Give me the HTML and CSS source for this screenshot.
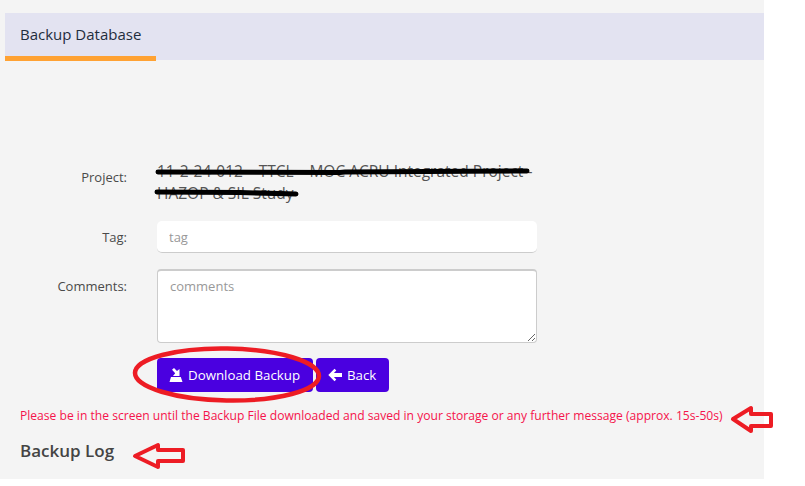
FILE: index.html
```html
<!DOCTYPE html>
<html lang="en">
<head>
  <meta charset="UTF-8">
  <title>Backup Database</title>
  <link rel="stylesheet" href="styles.css">
</head>
<body>
  <div class="page">
    <div class="tabs">
      <div class="tab">Backup Database</div>
    </div>

    <form class="backup-form">
      <div class="row project-row">
        <label>Project:</label>
        <div class="project-name">11-2-24-012 – TTCL – MOC ACRU Integrated Project - HAZOP &amp; SIL Study</div>
      </div>
      <div class="row tag-row">
        <label for="tag">Tag:</label>
        <input id="tag" class="field" type="text" placeholder="tag">
      </div>
      <div class="row comments-row">
        <label for="comments">Comments:</label>
        <textarea id="comments" class="field area" placeholder="comments"></textarea>
      </div>
      <div class="actions">
        <button type="button" class="btn btn-download">
          <svg class="icon" viewBox="0 0 14 14"><path d="M3 1.800 L5 0 L8 3 L10.500 1 L10.500 8 L4 8 L6.200 5.200 Z M2 9 L11.800 9 L13.500 14 L0.500 14 Z"/></svg>
          Download Backup
        </button>
        <button type="button" class="btn btn-back">
          <svg class="icon" viewBox="0 0 14 14"><path d="M6.500 0.800 L8.300 2.600 L5.900 5 L14 5 L14 9 L5.900 9 L8.300 11.400 L6.500 13.200 L0.300 7 Z"/></svg>
          Back
        </button>
      </div>
    </form>

    <p class="warning">Please be in the screen until the Backup File downloaded and saved in your storage or any further message (approx. 15s-50s)</p>
    <h2 class="log-title">Backup Log</h2>
    <p class="log-line">Backups of this project are listed below here</p>
  </div>

  <!-- marks drawn over the screenshot -->
  <svg class="marks" width="805" height="486" viewBox="0 0 805 486">
    <path class="scribble" d="M158 172 L340 172.500 L345 172 L527 171"/>
    <path class="scribble" d="M157 192 L240 192.500 L296 194"/>
    <ellipse class="ring" cx="227" cy="374.500" rx="92" ry="26" transform="rotate(1 227 374)"/>
    <path class="arrow" d="M733 419 L751 408 L751 414 L771 414 L771 426 L751 426 L751 431 Z"/>
    <path class="arrow" d="M135 456 L158 445 L158 450 L183 450 L183 461 L158 461 L158 467 Z"/>
  </svg>
</body>
</html>
```

FILE: styles.css
```css
html, body {
  margin: 0;
  height: 100%;
  background: #fff;
}
body {
  font-family: "Open Sans", "Noto Sans", sans-serif;
  font-size: 14px;
  color: #444;
  overflow: hidden;
}
.page {
  width: 764px;
  height: 479px;
  box-sizing: border-box;
  padding-top: 13px;
  background: #f4f4f4;
  overflow: hidden;
}
.tabs {
  margin-left: 5px;
  height: 47px;
  background: #e3e3f1;
}
.tab {
  width: 151px;
  height: 48px;
  box-sizing: border-box;
  padding: 11px 0 0 15px;
  font-size: 15px;
  line-height: 20px;
  color: #1f2d3d;
  border-bottom: 5px solid #ffa233;
}
.backup-form {
  margin-top: 100px;
}
.row {
  display: flex;
  align-items: flex-start;
}
.row label {
  width: 127px;
  text-align: right;
  margin-right: 30px;
  font-size: 13px;
  line-height: 18px;
  color: #4a4a4a;
}
.project-row label {
  padding-top: 8px;
}
.project-name {
  width: 380px;
  line-height: 22px;
  color: #555;
  font-size: 15.500px;
}
.tag-row {
  margin-top: 17px;
}
.tag-row label {
  padding-top: 7px;
}
.comments-row {
  margin-top: 16px;
}
.comments-row label {
  padding-top: 8px;
}
.field {
  width: 380px;
  box-sizing: border-box;
  background: #fff;
  font-family: inherit;
  font-size: 13px;
  color: #444;
  outline: none;
}
input.field {
  height: 32px;
  padding: 0 12px;
  border: 0;
  border-bottom: 1px solid #ccc;
  border-radius: 5px;
}
.area {
  display: block;
  height: 74px;
  padding: 6px 12px;
  border: 1px solid #ccc;
  border-top-width: 2px;
  border-radius: 4px;
}
.field::placeholder {
  color: #999;
}
.actions {
  display: flex;
  gap: 3px;
  margin: 15px 0 0 157px;
}
.btn {
  display: flex;
  align-items: center;
  gap: 5px;
  height: 34px;
  padding: 0 0 0 12px;
  border: 0;
  border-radius: 4px;
  background: #4a00e0;
  color: #fff;
  font-family: inherit;
  font-size: 13.300px;
  white-space: nowrap;
}
.btn-download {
  width: 156px;
}
.btn-back {
  width: 73px;
}
.icon {
  width: 14px;
  height: 14px;
  fill: #fff;
  flex: none;
}
.warning {
  margin: 15px 0 0 20px;
  font-size: 12.100px;
  line-height: 18px;
  color: #f5134b;
  white-space: nowrap;
}
.log-title {
  margin: 14px 0 0 20px;
  font-size: 17px;
  font-weight: 600;
  color: #444;
  line-height: 24px;
}
.log-line {
  margin: 12px 0 0 140px;
  font-size: 13px;
  line-height: 18px;
  color: #555;
}
.marks {
  position: absolute;
  left: 0;
  top: 0;
  pointer-events: none;
}
.scribble {
  fill: none;
  stroke: #000;
  stroke-width: 5;
  stroke-linecap: round;
}
.ring {
  fill: none;
  stroke: #ed1c24;
  stroke-width: 4.500;
}
.arrow {
  fill: none;
  stroke: #ed1c24;
  stroke-width: 4;
  stroke-linejoin: round;
}
```
